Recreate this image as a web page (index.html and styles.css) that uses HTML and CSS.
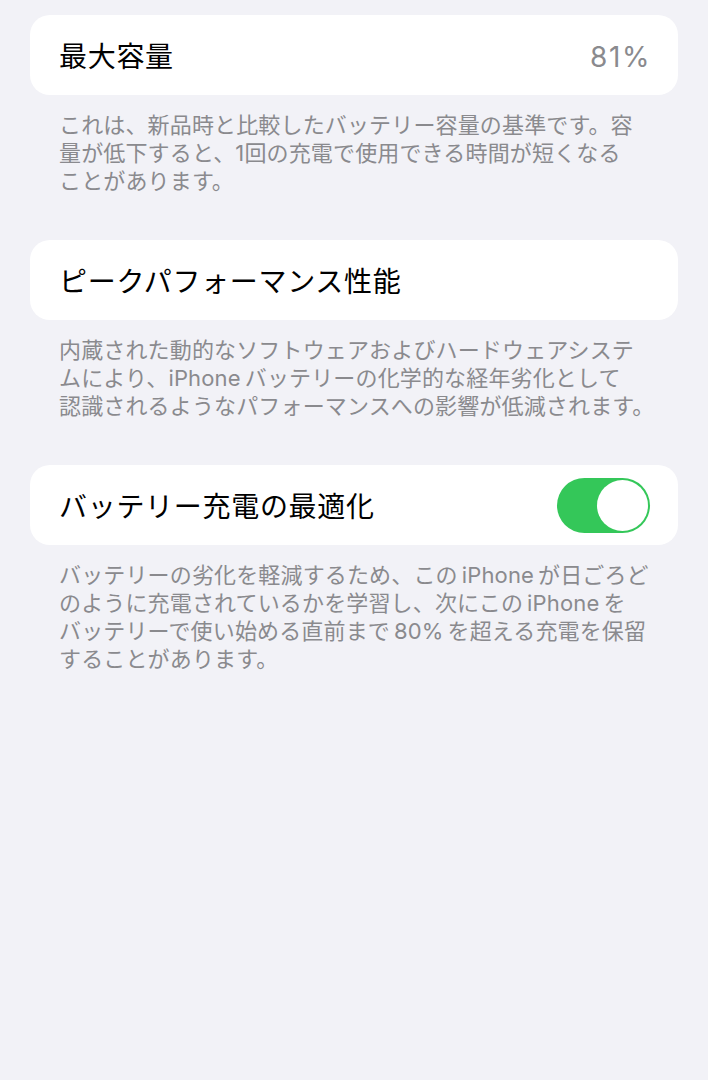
FILE: index.html
```html
<!DOCTYPE html>
<html lang="ja">
<head>
  <meta charset="UTF-8">
  <meta name="viewport" content="width=device-width, initial-scale=1.0">
  <title>バッテリーの状態と充電</title>
  <link rel="stylesheet" href="styles.css">
</head>
<body>
  <div class="container">
    <div class="section">
      <div class="card">
        <span class="card-title">最大容量</span>
        <span class="card-value">81%</span>
      </div>
      <p class="footer">これは、新品時と比較したバッテリー容量の基準です。容<br>量が低下すると、1回の充電で使用できる時間が短くなる<br>ことがあります。</p>
    </div>

    <div class="section">
      <div class="card">
        <span class="card-title">ピークパフォーマンス性能</span>
      </div>
      <p class="footer">内蔵された動的なソフトウェアおよびハードウェアシステ<br>ムにより、<span class="latin after-comma">iPhone</span>バッテリーの化学的な経年劣化として<br>認識されるようなパフォーマンスへの影響が低減されます。</p>
    </div>

    <div class="section">
      <div class="card">
        <span class="card-title">バッテリー充電の最適化</span>
        <span class="toggle on"><span class="knob"></span></span>
      </div>
      <p class="footer">バッテリーの劣化を軽減するため、この<span class="latin">iPhone</span>が日ごろど<br>のように充電されているかを学習し、次にこの<span class="latin">iPhone</span>を<br>バッテリーで使い始める直前まで<span class="latin">80%</span>を超える充電を保留<br>することがあります。</p>
    </div>
  </div>
</body>
</html>
```

FILE: styles.css
```css
body {
  margin: 0;
  background-color: #f2f2f7;
  font-family: Inter, "Noto Sans CJK JP", sans-serif;
  color: #000;
}

.container {
  padding: 15px 30px 0 30px;
}

.section {
  margin-bottom: 45px;
}

.card {
  display: flex;
  align-items: center;
  justify-content: space-between;
  box-sizing: border-box;
  height: 80px;
  padding: 3px 28px 0 29px;
  background-color: #fff;
  border-radius: 20px;
}

.card-title {
  font-size: 28px;
  line-height: 34px;
  letter-spacing: 0.7px;
}

.card-value {
  font-size: 28px;
  line-height: 34px;
  letter-spacing: 1.6px;
  color: #8a8a8e;
  margin-right: -1px;
}

.footer {
  margin: 16px 0 0 0;
  padding: 0 29px;
  font-size: 22px;
  line-height: 28px;
  letter-spacing: 0.15px;
  color: #8a8a8e;
  white-space: nowrap;
}

.latin {
  margin: 0 4px;
}

.latin.after-comma {
  margin-left: 0;
}

.toggle {
  display: flex;
  align-items: center;
  justify-content: flex-end;
  width: 93px;
  height: 55px;
  margin-top: -3px;
  padding: 2px;
  box-sizing: border-box;
  border-radius: 28px;
  background-color: #34c759;
}

.knob {
  width: 51px;
  height: 51px;
  border-radius: 50%;
  background-color: #fff;
}
```
